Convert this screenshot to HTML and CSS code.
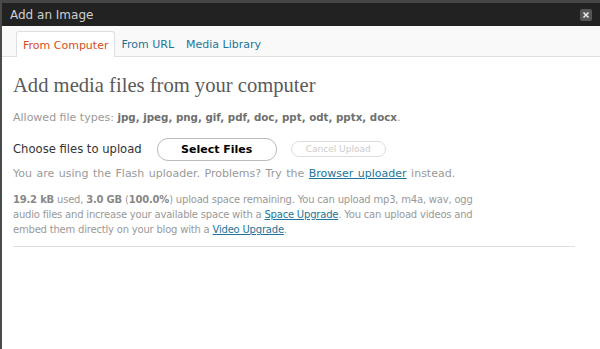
FILE: index.html
```html
<!DOCTYPE html>
<html lang="en">
<head>
    <meta charset="UTF-8">
    <title>Add an Image</title>
    <link rel="stylesheet" href="styles.css">
</head>
<body>

    <!-- dialog frame -->
    <div class="dialog">
        <div class="titlebar">
            <span class="title">Add an Image</span>
            <a href="#" class="close" title="Close">
                <svg width="12" height="12" viewBox="0 0 12 12">
                    <path d="M3.5 3.5 L8.5 8.5 M8.5 3.5 L3.5 8.5" stroke="#e6e6e6" stroke-width="1.7" fill="none"/>
                </svg>
            </a>
        </div>

        <div class="body">
            <ul class="tabs">
                <li class="tab current">From Computer</li>
                <li class="tab"><a href="#">From URL</a></li>
                <li class="tab"><a href="#">Media Library</a></li>
            </ul>

            <div class="content">
                <h3>Add media files from your computer</h3>

                <p class="types">Allowed file types: <strong>jpg, jpeg, png, gif, pdf, doc, ppt, odt, pptx, docx</strong>.</p>

                <div class="upload-row">
                    <span class="label">Choose files to upload</span>
                    <button class="btn select">Select Files</button>
                    <button class="btn cancel" disabled>Cancel Upload</button>
                </div>
                <p class="hint">You are using the Flash uploader. Problems? Try the <a href="#">Browser uploader</a> instead.</p>

                <p class="quota"><strong>19.2 kB</strong> used, <strong>3.0 GB</strong> (<strong>100.0%</strong>) upload space remaining. You can upload mp3, m4a, wav, ogg audio files and increase your available space with a <a href="#">Space Upgrade</a>. You can upload videos and embed them directly on your blog with a <a href="#">Video Upgrade</a>.</p>

                <hr>
            </div>
        </div>
    </div>

</body>
</html>
```

FILE: styles.css
```css
body {
    margin: 0;
    padding: 0;
    background: #fff;
    font-family: "DejaVu Sans", Verdana, sans-serif;
    font-size: 11px;
    color: #333;
}
.dialog {
    height: 349px;
    border-top: 3px solid #464646;
    border-left: 2px solid #4a4a4a;
    box-sizing: border-box;
    background: #fff;
}
.titlebar {
    height: 23px;
    background: #222;
    display: flex;
    align-items: center;
    justify-content: space-between;
    padding: 0 8px 0 8px;
}
.title {
    color: #cfcfcf;
    font-size: 12px;
}
.close {
    width: 12px;
    height: 12px;
    background: #555;
    border-radius: 2px;
    display: flex;
    margin-top: 1px;
}
.tabs {
    list-style: none;
    margin: 0;
    padding: 5px 0 0 14px;
    background: #f9f9f9;
    border-bottom: 1px solid #dfdfdf;
    display: flex;
    height: 25px;
}
.tab {
    font-size: 11px;
    padding: 0 6px;
    line-height: 27px;
    color: #21759b;
}
.tab a {
    color: #21759b;
    text-decoration: none;
}
.tab.current {
    background: #fff;
    color: #d54e21;
    border: 1px solid #dfdfdf;
    border-bottom: none;
    border-radius: 3px 3px 0 0;
    height: 25px;
}
.content {
    padding: 0 25px 0 11px;
}
h3 {
    font-family: "Liberation Serif", Georgia, serif;
    font-weight: normal;
    font-size: 20.6px;
    color: #5a5a5a;
    margin: 17px 0 14px;
}
.types {
    color: #999;
    margin: 0 0 13px;
}
.types strong {
    color: #6f6f6f;
    font-size: 10.3px;
}
.upload-row {
    display: flex;
    align-items: center;
    height: 24px;
}
.label {
    font-size: 11.6px;
    margin-right: 15px;
}
.btn {
    font-family: "DejaVu Sans", Verdana, sans-serif;
    border-radius: 11px;
    background: #fff;
}
.select {
    width: 120px;
    height: 23px;
    border: 1px solid #bbb;
    font-size: 11px;
    font-weight: bold;
    color: #000;
    margin-right: 14px;
}
.cancel {
    width: 95px;
    height: 16px;
    border: 1px solid #ddd;
    font-size: 9px;
    color: #ccc;
    padding: 0;
}
.hint {
    color: #999;
    word-spacing: 1px;
    margin: 6px 0 12px;
}
a {
    color: #21759b;
}
.quota {
    color: #999;
    font-size: 10px;
    letter-spacing: -0.2px;
    line-height: 15px;
    max-width: 478px;
    margin: 0 0 9px;
}
.quota strong {
    color: #888;
}
hr {
    border: none;
    border-top: 1px solid #dfdfdf;
    margin: 0;
}
```
